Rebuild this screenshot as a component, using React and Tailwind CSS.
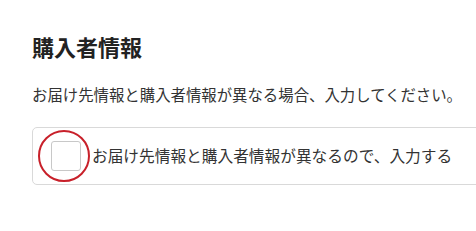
import React from 'react';

const FONT = '"Noto Sans CJK JP", "Liberation Sans", sans-serif';

export default function App() {
  return (
    <div className="w-[476px] h-[231px] overflow-hidden bg-white text-[#333]" style={{ fontFamily: FONT }}>
      <div className="pl-[32px] pt-[30px]">
        <h2 className="text-[22px] font-bold leading-[32px] text-[#222]">購入者情報</h2>
        <p className="mt-[21px] text-[15.4px] leading-[22px]">
          お届け先情報と購入者情報が異なる場合、入力してください。
        </p>
        <label className="mt-[22px] flex items-center w-[470px] h-[58px] border border-[#d9d9d9] rounded-[5px] pl-[18px]">
          <span className="relative flex-shrink-0">
            <span className="block w-[30px] h-[30px] border border-[#c8c8c8] rounded-[3px] bg-white" />
            <span className="absolute left-[-13px] top-[-11px] w-[52px] h-[52px] rounded-full border-2 border-[#c8202a]" />
          </span>
          <span className="ml-[11px] text-[15.7px] leading-[22px]">
            お届け先情報と購入者情報が異なるので、入力する
          </span>
        </label>
      </div>
    </div>
  );
}
